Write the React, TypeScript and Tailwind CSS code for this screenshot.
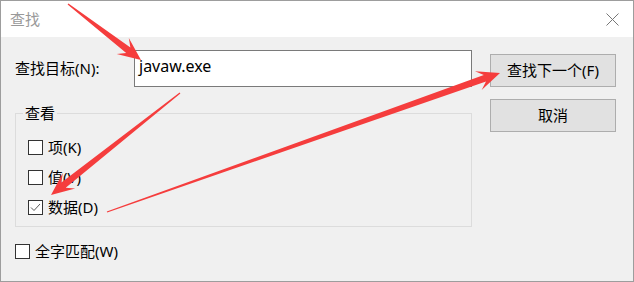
import React from "react";

type Pt = [number, number];

const arrowPoints = (from: Pt, to: Pt) => {
  const [x1, y1] = from;
  const [x2, y2] = to;
  const len = Math.hypot(x2 - x1, y2 - y1);
  const ux = (x2 - x1) / len;
  const uy = (y2 - y1) / len;
  const nx = -uy;
  const ny = ux;
  const at = (back: number, side: number): string =>
    `${(x2 - ux * back + nx * side).toFixed(1)},${(y2 - uy * back + ny * side).toFixed(1)}`;
  const tail = (side: number) =>
    `${(x1 + nx * side).toFixed(1)},${(y1 + ny * side).toFixed(1)}`;
  return [
    tail(0.6),
    at(16, 3.4),
    at(23, 10),
    at(0, 0),
    at(23, -10),
    at(16, -3.4),
    tail(-0.6),
  ].join(" ");
};

const arrows: { from: Pt; to: Pt }[] = [
  { from: [68, 4], to: [141, 60] },
  { from: [180, 93], to: [51, 195] },
  { from: [107, 212], to: [500, 73] },
];

const CheckBox = ({ checked }: { checked?: boolean }) => (
  <span className="flex h-[15px] w-[15px] shrink-0 items-center justify-center border border-[#333333] bg-white">
    {checked && (
      <svg width="11" height="9" viewBox="0 0 11 9">
        <path d="M1 4.5 L4 7.5 L10 1" fill="none" stroke="#5a5a5a" strokeWidth="1" />
      </svg>
    )}
  </span>
);

const Option = ({ label, checked }: { label: string; checked?: boolean }) => (
  <label className="flex h-[15px] items-center gap-[5px] text-[15px] leading-none text-black">
    <CheckBox checked={checked} />
    <span>{label}</span>
  </label>
);

export default function App() {
  return (
    <div
      className="relative h-[282px] w-[634px] overflow-hidden border border-[#9d9d9d] bg-[#f0f0f0]"
      style={{ fontFamily: '"Segoe UI", "Noto Sans", "Noto Sans CJK SC", sans-serif' }}
    >
      {/* title bar */}
      <div className="flex h-[36px] items-center justify-between bg-white pl-[9px] pr-[14px]">
        <span className="text-[15px] text-[#999999]">查找</span>
        <svg width="13" height="13" viewBox="0 0 13 13">
          <path d="M0.5 0.5 L12.5 12.5 M12.5 0.5 L0.5 12.5" stroke="#777777" strokeWidth="1" />
        </svg>
      </div>

      <div className="flex pl-[14px]">
        {/* left column */}
        <div className="flex w-[457px] flex-col">
          <div className="mt-[13px] flex items-center">
            <span className="w-[119px] text-[15px] text-black">查找目标(N):</span>
            <div className="flex h-[37px] w-[338px] items-start border border-[#7a7a7a] bg-white pl-[4px] pt-[5px] text-[16px] leading-[20px] text-black">
              javaw.exe
            </div>
          </div>

          <div className="relative mt-[26px] flex h-[114px] flex-col gap-[15px] border border-[#dcdcdc] pl-[12px] pt-[26px]">
            <span className="absolute -top-[12px] left-[7px] bg-[#f0f0f0] px-[2px] text-[15px] text-black">
              查看
            </span>
            <Option label="项(K)" />
            <Option label="值(V)" />
            <Option label="数据(D)" checked />
          </div>

          <div className="mt-[17px]">
            <Option label="全字匹配(W)" />
          </div>
        </div>

        {/* right column */}
        <div className="ml-[18px] mt-[17px] flex flex-col gap-[12px]">
          <button className="flex h-[33px] w-[126px] items-center justify-center border border-[#adadad] bg-[#e1e1e1] text-[15px] text-black">
            查找下一个(F)
          </button>
          <button className="flex h-[33px] w-[126px] items-center justify-center border border-[#adadad] bg-[#e1e1e1] text-[15px] text-black">
            取消
          </button>
        </div>
      </div>

      {/* annotation arrows */}
      <svg className="pointer-events-none absolute -left-px -top-px" width="634" height="282">
        {arrows.map((a, i) => (
          <polygon key={i} points={arrowPoints(a.from, a.to)} fill="#f53d3d" />
        ))}
      </svg>
    </div>
  );
}
